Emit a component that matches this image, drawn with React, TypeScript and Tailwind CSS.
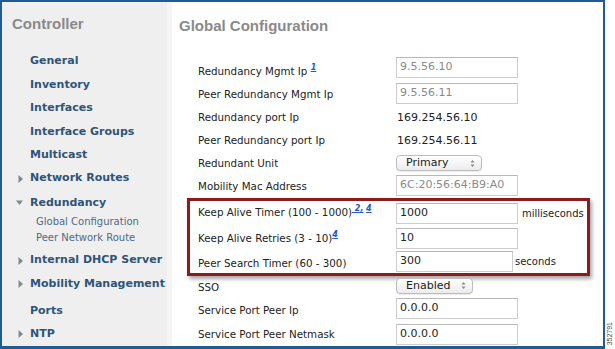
import React from "react"

const navFont = { fontFamily: '"DejaVu Sans", Verdana, sans-serif' }

const Arrow = ({ down = false }: { down?: boolean }) => (
  <svg width="7" height="8" viewBox="0 0 7 8" className="shrink-0">
    {down ? <path d="M0 1.5 L7 1.5 L3.5 6 Z" fill="#7c8b8b" /> : <path d="M1.5 0 L6 4 L1.5 8 Z" fill="#7c8b8b" />}
  </svg>
)

const NavItem = ({ label, arrow, h = "h-[23.4px]" }: { label: string; arrow?: boolean; h?: string }) => (
  <div className={`flex items-center ${h}`}>
    <div className="w-[28px] pl-[15px]">{arrow && <Arrow />}</div>
    <span className="text-[11px] font-bold text-[#2f5478]">{label}</span>
  </div>
)

const Sidebar = () => (
  <div className="w-[165px] bg-[#efefef] flex flex-col" style={navFont}>
    <div className="h-[45px] pl-[10px] flex items-center">
      <span className="text-[15px] font-bold text-[#8a8a8a]" style={{ fontFamily: '"Liberation Sans", Arial, sans-serif' }}>
        Controller
      </span>
    </div>
    <div className="h-[3px]" />
    <NavItem label="General" />
    <NavItem label="Inventory" />
    <NavItem label="Interfaces" />
    <NavItem label="Interface Groups" />
    <NavItem label="Multicast" />
    <NavItem label="Network Routes" arrow />
    <div className="flex items-center h-[21px] mt-[2px]">
      <div className="w-[28px] pl-[14px]">
        <Arrow down />
      </div>
      <span className="text-[11px] font-bold text-[#2f5478]">Redundancy</span>
    </div>
    <div className="h-[16px] pl-[34px] flex items-center text-[10px] text-[#4f6a85]">Global Configuration</div>
    <div className="h-[16px] pl-[34px] flex items-center text-[10px] text-[#4f6a85]">Peer Network Route</div>
    <div className="h-[3.6px]" />
    <NavItem label="Internal DHCP Server" arrow />
    <NavItem label="Mobility Management" arrow />
    <NavItem label="Ports" h="h-[23.4px] mt-[4px]" />
    <NavItem label="NTP" arrow h="h-[22px]" />
  </div>
)

const Sup = ({ children }: { children: React.ReactNode }) => (
  <sup className="text-[8px] font-bold italic text-[#2257d6] underline -top-[5px]">{children}</sup>
)

const Input = ({ value, dim, w = "w-[122px]", shift = "" }: { value: string; dim?: boolean; w?: string; shift?: string }) => (
  <div
    className={`${w} h-[21px] border border-[#cdcdcd] border-t-[#b8b8b8] bg-white flex items-center pl-[3px] text-[11px] ${
      dim ? "text-[#8a8a8a]" : "text-[#222]"
    } ${shift}`}
  >
    {value}
  </div>
)

const Select = ({ value, w, shift = "" }: { value: string; w: string; shift?: string }) => (
  <div
    className={`${w} h-[16px] ${shift} rounded-[4px] border border-[#bdbdbd] bg-gradient-to-b from-white to-[#ececec] flex items-center justify-between pl-[9px] pr-[6px] text-[11px] text-[#222] shadow-[0_1px_1px_rgba(0,0,0,0.08)]`}
  >
    <span>{value}</span>
    <svg width="5" height="9" viewBox="0 0 5 9">
      <path d="M0.5 3.5 L2.5 1 L4.5 3.5 Z M0.5 5.5 L2.5 8 L4.5 5.5 Z" fill="#8a8a8a" />
    </svg>
  </div>
)

const Row = ({ label, children, h = "h-[23.1px]" }: { label: React.ReactNode; children?: React.ReactNode; h?: string }) => (
  <div className={`flex items-center ${h} pl-[11px]`}>
    <div className="w-[198px] text-[10.3px] text-[#222]">{label}</div>
    <div className="flex items-center">{children}</div>
  </div>
)

const Content = () => (
  <div className="flex-1 bg-white flex flex-col" style={navFont}>
    <div className="h-[50px] pl-[7px] flex items-center">
      <span className="text-[15px] font-bold text-[#8a8a8a]" style={{ fontFamily: '"Liberation Sans", Arial, sans-serif' }}>
        Global Configuration
      </span>
    </div>
    <div className="pl-[15px] pt-[9.5px] flex flex-col">
      <Row
        label={
          <>
            Redundancy Mgmt Ip <Sup>1</Sup>
          </>
        }
      >
        <Input value="9.5.56.10" dim shift="mb-[8px]" />
      </Row>
      <Row label="Peer Redundancy Mgmt Ip">
        <Input value="9.5.56.11" dim shift="mb-[2px]" />
      </Row>
      <Row label="Redundancy port Ip">
        <span className="text-[11px] text-[#222] pl-[1px]">169.254.56.10</span>
      </Row>
      <Row label="Peer Redundancy port Ip">
        <span className="text-[11px] text-[#222] pl-[1px]">169.254.56.11</span>
      </Row>
      <Row label="Redundant Unit">
        <Select value="Primary" w="w-[86px]" shift="mb-[1px]" />
      </Row>
      <Row label="Mobility Mac Address" h="h-[22px]">
        <Input value="6C:20:56:64:B9:A0" dim shift="mb-[3px]" />
      </Row>
      <div className="w-[403px] border-[3px] border-[#8c1b1b] shadow-[2px_3px_4px_rgba(0,0,0,0.35)] flex flex-col">
        <div className="flex items-center h-[25px] pl-[8px]">
          <div className="w-[198px] text-[10.3px] text-[#222]">
            Keep Alive Timer (100 - 1000)
            <Sup>&nbsp;2,</Sup>
            <sup className="text-[8px]"> </sup>
            <Sup>4</Sup>
          </div>
          <Input value="1000" />
          <span className="pl-[4px] text-[10px] text-[#222]">milliseconds</span>
        </div>
        <div className="flex items-center h-[25px] pl-[8px]">
          <div className="w-[198px] text-[10.3px] text-[#222] mt-[2px]">
            Keep Alive Retries (3 - 10)<Sup>4</Sup>
          </div>
          <Input value="10" />
        </div>
        <div className="flex items-center h-[22px] pl-[8px]">
          <div className="w-[198px] text-[10.3px] text-[#222] mt-[4px]">Peer Search Timer (60 - 300)</div>
          <Input value="300" w="w-[117px]" />
          <span className="pl-[2px] text-[10px] text-[#222]">seconds</span>
        </div>
      </div>
      <Row label="SSO" h="h-[23.5px]">
        <Select value="Enabled" w="w-[77px]" shift="mb-[3px]" />
      </Row>
      <Row label="Service Port Peer Ip" h="h-[23.5px]">
        <Input value="0.0.0.0" shift="mb-[5px]" />
      </Row>
      <Row label="Service Port Peer Netmask" h="h-[23.5px]">
        <Input value="0.0.0.0" />
      </Row>
    </div>
  </div>
)

export default function App() {
  return (
    <div className="w-[615px] h-[349px] bg-white flex overflow-hidden">
      <div className="w-[605px] h-[349px] border-l-2 border-r-2 border-t-2 border-b-[3px] border-[#205b93] flex overflow-hidden">
        <Sidebar />
        <div className="w-[5px] bg-[#f5f5f5]" />
        <Content />
      </div>
      <div className="flex-1 flex items-end justify-center pb-[4px]">
        <span
          className="text-[7px] text-[#444] rotate-180 [writing-mode:vertical-rl]"
          style={{ fontFamily: '"Liberation Sans", Arial, sans-serif' }}
        >
          352791
        </span>
      </div>
    </div>
  )
}
